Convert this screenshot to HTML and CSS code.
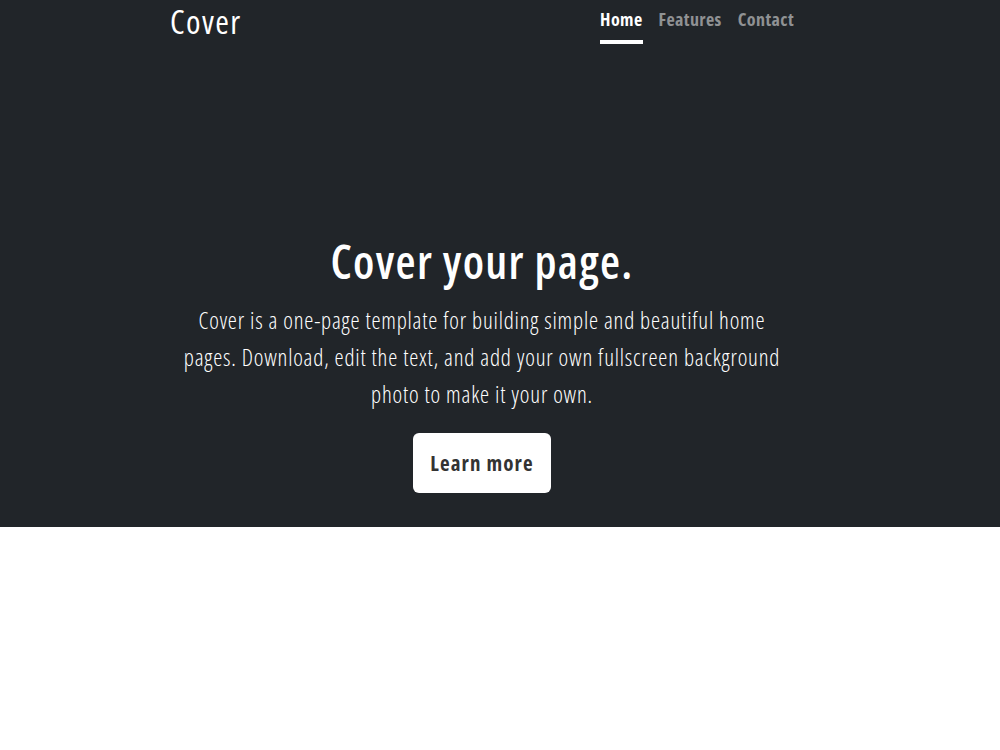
FILE: index.html
```html
<!DOCTYPE html>
<html lang="en">
<head>
    <meta charset="UTF-8">
    <meta name="viewport" content="width=device-width, initial-scale=1.0">
    <title>Cover Template</title>
    <link rel="stylesheet" href="styles.css">
</head>
<body>
    <div class="cover">
        <div class="cover-container">
            <header class="masthead">
                <h3 class="masthead-brand">Cover</h3>
                <nav class="nav-masthead">
                    <a class="nav-link active" href="#">Home</a>
                    <a class="nav-link" href="#">Features</a>
                    <a class="nav-link" href="#">Contact</a>
                </nav>
            </header>

            <main class="hero">
                <h1>Cover your page.</h1>
                <p class="lead">Cover is a one-page template for building simple and beautiful home pages. Download, edit the text, and add your own fullscreen background photo to make it your own.</p>
                <a href="#" class="btn-learn">Learn more</a>
            </main>
        </div>
    </div>
</body>
</html>
```

FILE: styles.css
```css
body {
    margin: 0;
    background-color: white;
    font-family: "Open Sans", "Noto Sans", sans-serif;
    font-stretch: 75%;
}

.cover {
    background-color: #212529;
    color: white;
    height: 527px;
}

.cover-container {
    width: 624px;
    margin-left: 170px;
}

.masthead {
    display: flex;
    justify-content: space-between;
    align-items: flex-start;
}

.masthead-brand {
    margin: 0;
    font-size: 33px;
    font-weight: 500;
    letter-spacing: 1.4px;
    line-height: 44px;
}

.nav-masthead {
    display: flex;
    gap: 16px;
    padding-top: 6px;
}

.nav-link {
    color: rgba(255, 255, 255, 0.5);
    font-weight: 700;
    font-size: 18px;
    letter-spacing: 0.4px;
    text-decoration: none;
    line-height: 26px;
    padding-bottom: 8px;
    border-bottom: 4px solid transparent;
}

.nav-link.active {
    color: white;
    border-bottom-color: white;
}

.hero {
    text-align: center;
    padding-top: 189px;
}

.hero h1 {
    margin: 0;
    font-size: 46px;
    font-weight: 600;
    letter-spacing: 1.3px;
    line-height: 56px;
}

.lead {
    margin: 13px 10px 20px;
    font-size: 23px;
    font-weight: 300;
    letter-spacing: 0.8px;
    line-height: 37px;
}

.btn-learn {
    display: inline-block;
    background-color: white;
    color: #333;
    font-size: 21px;
    font-weight: 700;
    letter-spacing: 1.1px;
    text-decoration: none;
    padding: 16px 17px;
    line-height: 28px;
    border-radius: 6px;
}
```
